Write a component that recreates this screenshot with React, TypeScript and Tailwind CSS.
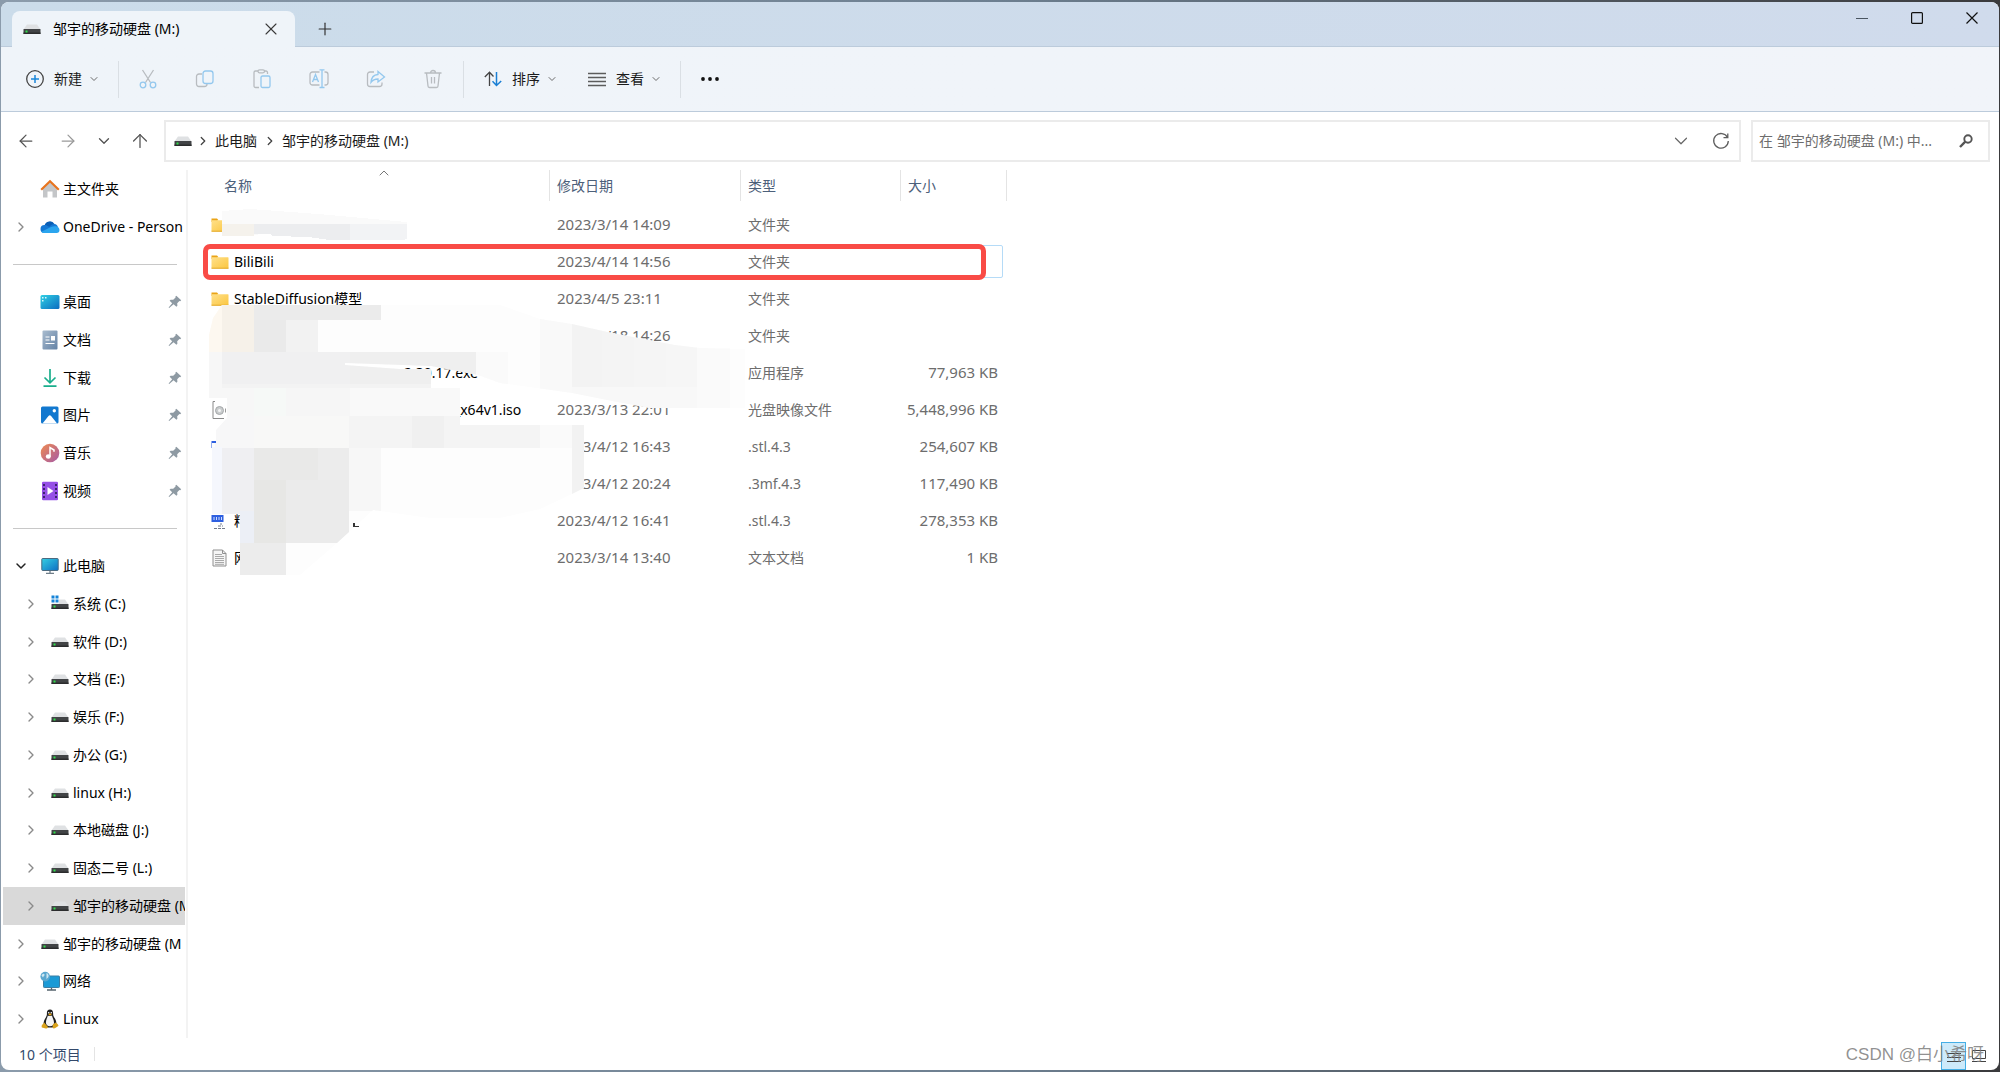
import type { ReactNode } from "react";
import { ArrowLeft, ArrowRight, ArrowUp, ChevronDown, ChevronRight, ChevronUp, Plus, X } from "lucide-react";
import clsx from "clsx";

function DriveIcon({ system = false }: { system?: boolean }) {
  return (
    <svg width="18" height="18" viewBox="0 0 18 18" className="shrink-0">
      <path d="M4 4.5h10l3.2 4.5H0.8z" fill="#dfe1e3" />
      <rect x="0.5" y="9" width="17" height="5" rx="0.5" fill="#424446" />
      <rect x="0.5" y="12.5" width="17" height="1.5" fill="#2b2c2d" />
      <rect x="2.5" y="10.5" width="2" height="2" fill="#2fe04a" />
      {system && (
        <>
          <rect x="0" y="0" width="8" height="8.6" fill="#fff" />
          <path d="M0.5 0.5h3v3h-3zM4.5 0.5h3v3h-3zM0.5 4.5h3v3h-3zM4.5 4.5h3v3h-3z" fill="#1583d8" />
        </>
      )}
    </svg>
  );
}

function HomeIcon() {
  return (
    <svg width="20" height="20" viewBox="0 0 20 20" className="-mx-px shrink-0">
      <path d="M3 9l7-6.500 7 6.500v9.500h-4.500v-6h-5v6H3z" fill="#c4c6c8" />
      <path d="M1.200 10.800L10 2.200l8.800 8.600" fill="none" stroke="#e8741e" strokeWidth="2.200" />
    </svg>
  );
}

function OneDriveIcon() {
  return (
    <svg width="20" height="20" viewBox="0 0 20 20" className="-mx-px shrink-0">
      <path d="M4.500 8.500a5.500 5.500 0 0 1 10-1.500l-6 6.500-6-2z" fill="#0a5eb5" />
      <path d="M4.500 16a4 4 0 0 1 0-8c1.500 0 2.500.5 3.500 1.200L16 13l-2 3z" fill="#1478d4" />
      <path d="M9 10.500c1-2 3-3.500 5.300-3.500 2 0 3.400 1.500 3.500 3l-4 3z" fill="#1478d4" />
      <path d="M4 16c-1 0-2-.5-2.600-1.300L11 10a8 8 0 0 1 5-.7c2 .4 3.500 1.900 3.500 3.700a3 3 0 0 1-3 3z" fill="#2ba5ee" />
    </svg>
  );
}

function DesktopIcon() {
  return (
    <svg width="20" height="20" viewBox="0 0 20 20" className="-mx-px shrink-0">
      <defs>
        <linearGradient id="desk" x1="0" y1="0" x2="1" y2="1">
          <stop offset="0" stopColor="#2fd0e4" />
          <stop offset="1" stopColor="#0c6cc0" />
        </linearGradient>
      </defs>
      <rect x="0.5" y="3" width="19" height="14" rx="1.500" fill="url(#desk)" />
      <path d="M2 5h1.500v1.500H2zM2 8h1.500v1.500H2zM5 5h1.500v1.500H5z" fill="#d4f6fb" />
    </svg>
  );
}

function DocumentIcon() {
  return (
    <svg width="20" height="20" viewBox="0 0 20 20" className="-mx-px shrink-0">
      <defs>
        <linearGradient id="doc" x1="0" y1="0" x2="1" y2="1">
          <stop offset="0" stopColor="#a9bccf" />
          <stop offset="1" stopColor="#6482a5" />
        </linearGradient>
      </defs>
      <rect x="2.500" y="0.5" width="15" height="19" rx="1" fill="url(#doc)" />
      <path d="M5.500 7h4M5.500 10h4M5.500 13.500h9" stroke="#fff" strokeWidth="1.200" />
      <rect x="11" y="6" width="4" height="4.500" fill="#fff" />
    </svg>
  );
}

function DownloadIcon() {
  return (
    <svg width="20" height="20" viewBox="0 0 20 20" fill="none" stroke="#1aae8c" strokeWidth="1.700" className="-mx-px shrink-0">
      <path d="M10 1v13.500M4.500 9.500l5.500 5.300 5.500-5.300M3.500 18.200h13" />
    </svg>
  );
}

function PictureIcon() {
  return (
    <svg width="20" height="20" viewBox="0 0 20 20" className="-mx-px shrink-0">
      <rect x="1" y="1.500" width="17.500" height="17" rx="1.500" fill="#1278cf" />
      <path d="M2.500 18.500l6-7.500q1.300-1.500 2.600 0l6 7.500z" fill="#fff" />
      <circle cx="14.300" cy="5.700" r="1.700" fill="#fff" />
    </svg>
  );
}

function MusicIcon() {
  return (
    <svg width="20" height="20" viewBox="0 0 20 20" className="-mx-px shrink-0">
      <defs>
        <linearGradient id="mus" x1="0" y1="0" x2="1" y2="1">
          <stop offset="0" stopColor="#ef8b50" />
          <stop offset="1" stopColor="#a65aa6" />
        </linearGradient>
      </defs>
      <circle cx="10" cy="10" r="9.300" fill="url(#mus)" />
      <ellipse cx="8.300" cy="13.500" rx="2.500" ry="2.200" fill="#fff" />
      <path d="M10 13.500V4.500l4 2.500v1.800" fill="none" stroke="#fff" strokeWidth="1.500" />
    </svg>
  );
}

function VideoIcon() {
  return (
    <svg width="20" height="20" viewBox="0 0 20 20" className="-mx-px shrink-0">
      <rect x="2" y="0.800" width="16" height="18.400" rx="1.200" fill="#9550e6" />
      <path d="M4 3v15M16 3v15" stroke="#3d2270" strokeWidth="2" strokeDasharray="2 2" />
      <path d="M7.500 6l6 4-6 4z" fill="#fff" />
    </svg>
  );
}

function ComputerIcon() {
  return (
    <svg width="18" height="18" viewBox="0 0 18 18" className="shrink-0">
      <defs>
        <linearGradient id="pc" x1="0" y1="0" x2="1" y2="1">
          <stop offset="0" stopColor="#35cfe2" />
          <stop offset="1" stopColor="#0f6fc4" />
        </linearGradient>
      </defs>
      <rect x="0.8" y="1.500" width="16.400" height="12" rx="0.800" fill="url(#pc)" stroke="#4b6a80" />
      <path d="M9 14v2M5 16.300h8" stroke="#6f7e89" strokeWidth="1.300" />
    </svg>
  );
}

function NetworkIcon() {
  return (
    <svg width="20" height="20" viewBox="0 0 20 20" className="-mx-px shrink-0">
      <rect x="3.500" y="5" width="16" height="11.500" rx="0.800" fill="#1b9ad6" stroke="#3c7ea3" />
      <path d="M11.500 17v1.500M7 19h9" stroke="#56646e" strokeWidth="1.300" />
      <circle cx="5.200" cy="5.600" r="4.800" fill="#5aa7cf" />
      <path d="M1.500 4.500c1-2 2.500-2 3-1s-1 1.500-1.500 3zM6.500 2c1.500.6 2.500 2 2 3.500s-1.500 1.500-2 3z" fill="#cfe7f2" />
    </svg>
  );
}

function TuxIcon() {
  return (
    <svg width="18" height="20" viewBox="0 0 18 20" className="shrink-0">
      <path d="M9 0.500c-2.300 0-3.200 1.600-3.100 3.600.1 2.400-.2 3-1.400 4.900C3.200 11 2.500 13 2.600 15l4 3.500h5l3.800-3.500c.1-2.500-.7-4.500-2-6.300-1.100-1.600-1.300-2.300-1.300-4.400C12.100 2 11.200.5 9 .5z" fill="#1d1d1d" />
      <path d="M9 6.800c-1 .4-1.800.2-2.200-.2C6.500 8.500 5 10.500 4.900 13.500c0 2 1.600 3.800 4.100 3.800s4.100-1.800 4-3.800c-.1-3-1.700-5-2-7-.5.500-1.200.7-2 .3z" fill="#f4f4f4" />
      <circle cx="7.700" cy="3.700" r="0.800" fill="#fff" />
      <circle cx="10.300" cy="3.700" r="0.800" fill="#fff" />
      <path d="M7.200 5.200L9 4.300l1.900.9L9 6.700z" fill="#e9a91b" />
      <path d="M3.200 13.500l3.600 4.300c.4 1.100-.6 1.900-2 1.600l-3.900-1c-.6-.3 0-1.500 0-2.600 1-.1 1.400-1.200 2.300-2.300zM14.700 13.500l-2.700 1.700c-.4 1.500-.5 2.600-.3 3.500.5 1 1.700.9 2.600.3l3-2c.5-.5-.4-1-.7-1.900z" fill="#d9a21c" />
    </svg>
  );
}

function FolderIcon() {
  return (
    <svg width="18" height="18" viewBox="0 0 18 18" className="shrink-0">
      <defs>
        <linearGradient id="fold" x1="0" y1="0" x2="1" y2="1">
          <stop offset="0" stopColor="#ffe08a" />
          <stop offset="1" stopColor="#fbc63f" />
        </linearGradient>
      </defs>
      <path d="M0.500 2.500h5.500l1.500 1.800h-1V6h-6z" fill="#eaa417" />
      <rect x="0.500" y="4.200" width="17" height="11.500" rx="0.600" fill="url(#fold)" />
      <path d="M0.500 15.200h17" stroke="#e2ac33" />
    </svg>
  );
}

function DiscIcon() {
  return (
    <svg width="18" height="18" viewBox="0 0 18 18" className="shrink-0">
      <path d="M4 0.500H2v17h11" fill="none" stroke="#8a8a8a" />
      <circle cx="8.500" cy="9.500" r="4" fill="#c9cccd" stroke="#a5a8aa" />
      <circle cx="8.500" cy="9.500" r="1.500" fill="#f4f4f4" />
      <path d="M14.500 7.500v4" stroke="#9b9b9b" />
    </svg>
  );
}

function ModelIcon() {
  return (
    <svg width="18" height="18" viewBox="0 0 18 18" className="shrink-0">
      <rect x="0.500" y="3" width="12" height="7" fill="#2d5fe0" />
      <path d="M3 5v3M5.500 5v3M8 5v3M10.500 5v3" stroke="#cfdcff" />
      <path d="M3 16.500h11M10 13v-2M7 14h5" stroke="#737b8a" strokeDasharray="3 1" />
    </svg>
  );
}

function TextIcon() {
  return (
    <svg width="18" height="18" viewBox="0 0 18 18" className="shrink-0">
      <path d="M2 1h9.500L15 4.500V17H2z" fill="#f5f5f5" stroke="#909090" />
      <path d="M11.500 1v3.500H15" fill="none" stroke="#909090" />
      <path d="M4 5.500h7M4 7.500h9M4 9.500h9M4 11.500h9M4 13.500h9M4 15.300h9" stroke="#a9a9a9" />
    </svg>
  );
}

function PinIcon() {
  return (
    <svg width="14" height="14" viewBox="0 0 14 14" className="shrink-0">
      <path d="M8.300 0.800l4.900 4.500-1 .9-.8-.2-2.200 2.300.2 2.500-1 1-2.800-2.600L1.200 13l-.6-.5L4.200 8.200 1.600 5.700l1-1 2.600.1 2.400-2.200-.3-.9z" fill="#8e9aa3" />
    </svg>
  );
}

const gray = "#b8bcc0";
const blue = "#94c8ee";

const editTools: { label: string; icon: ReactNode }[] = [
  {
    label: "剪切",
    icon: (
      <>
        <path d="M4.500 1l8 12.500M15.500 1l-8 12.500" stroke={gray} />
        <circle cx="5" cy="16" r="2.800" stroke={blue} />
        <circle cx="15" cy="16" r="2.800" stroke={blue} />
      </>
    ),
  },
  {
    label: "复制",
    icon: (
      <>
        <path d="M7 5H4a2.500 2.500 0 0 0-2.500 2.500v7.300A2.500 2.500 0 0 0 4 17.500h5.500A2.500 2.500 0 0 0 12 15" stroke={gray} />
        <rect x="8" y="2" width="10" height="12.500" rx="2.500" stroke={blue} />
      </>
    ),
  },
  {
    label: "粘贴",
    icon: (
      <>
        <path d="M7 18.500H3.500a1.500 1.500 0 0 1-1.500-1.500V3.500A1.500 1.500 0 0 1 3.500 2H6M12 2h2a1.500 1.500 0 0 1 1.500 1.500V5" stroke={gray} />
        <rect x="6" y="0.800" width="6.500" height="3" rx="1.500" stroke={gray} />
        <rect x="9" y="7" width="9" height="11.500" rx="1.500" stroke={blue} />
      </>
    ),
  },
  {
    label: "重命名",
    icon: (
      <>
        <path d="M10.500 3H3.500A2.500 2.500 0 0 0 1 5.500v8A2.500 2.500 0 0 0 3.500 16h7M15.500 3h1A2.500 2.500 0 0 1 19 5.500v8a2.500 2.500 0 0 1-2.500 2.500h-1" stroke={gray} />
        <path d="M3.500 13l3-7.500 3 7.500M4.500 10.500h4M13 1v17.500M10.500 0.800h5M10.500 18.500h5" stroke={blue} />
      </>
    ),
  },
  {
    label: "共享",
    icon: (
      <>
        <path d="M8 3H4a2.500 2.500 0 0 0-2.500 2.500V15A2.500 2.500 0 0 0 4 17.500h9.500A2.500 2.500 0 0 0 16 15v-1.500" stroke={gray} />
        <path d="M12 2.500l6.500 5.500-6.500 5v-3c-3.500 0-5 .5-7 3.300C5.300 8.500 8 5.800 12 5.500z" stroke={blue} />
      </>
    ),
  },
  {
    label: "删除",
    icon: (
      <path d="M1.500 4h17M3.500 4l1.500 13a1.500 1.500 0 0 0 1.500 1.500h7A1.500 1.500 0 0 0 15 17l1.500-13M7.500 4a2.500 2.500 0 0 1 5 0M8.500 8v6.500M11.500 8v6.500" stroke={gray} />
    ),
  },
];

type NavItem = {
  label: string;
  icon: ReactNode;
  arrow?: "right" | "down";
  nested?: boolean;
  pinned?: boolean;
  selected?: boolean;
};

const navItems: (NavItem | null)[] = [
  { label: "主文件夹", icon: <HomeIcon /> },
  { label: "OneDrive - Person", icon: <OneDriveIcon />, arrow: "right" },
  null,
  { label: "桌面", icon: <DesktopIcon />, pinned: true },
  { label: "文档", icon: <DocumentIcon />, pinned: true },
  { label: "下载", icon: <DownloadIcon />, pinned: true },
  { label: "图片", icon: <PictureIcon />, pinned: true },
  { label: "音乐", icon: <MusicIcon />, pinned: true },
  { label: "视频", icon: <VideoIcon />, pinned: true },
  null,
  { label: "此电脑", icon: <ComputerIcon />, arrow: "down" },
  { label: "系统 (C:)", icon: <DriveIcon system />, arrow: "right", nested: true },
  { label: "软件 (D:)", icon: <DriveIcon />, arrow: "right", nested: true },
  { label: "文档 (E:)", icon: <DriveIcon />, arrow: "right", nested: true },
  { label: "娱乐 (F:)", icon: <DriveIcon />, arrow: "right", nested: true },
  { label: "办公 (G:)", icon: <DriveIcon />, arrow: "right", nested: true },
  { label: "linux (H:)", icon: <DriveIcon />, arrow: "right", nested: true },
  { label: "本地磁盘 (J:)", icon: <DriveIcon />, arrow: "right", nested: true },
  { label: "固态二号 (L:)", icon: <DriveIcon />, arrow: "right", nested: true },
  { label: "邹宇的移动硬盘 (M:)", icon: <DriveIcon />, arrow: "right", nested: true, selected: true },
  { label: "邹宇的移动硬盘 (M", icon: <DriveIcon />, arrow: "right" },
  { label: "网络", icon: <NetworkIcon />, arrow: "right" },
  { label: "Linux", icon: <TuxIcon />, arrow: "right" },
];

const files: { name: string; icon: ReactNode; date: string; type: string; size: string; indent?: string }[] = [
  { name: "", icon: <FolderIcon />, date: "2023/3/14 14:09", type: "文件夹", size: "" },
  { name: "BiliBili", icon: <FolderIcon />, date: "2023/4/14 14:56", type: "文件夹", size: "" },
  { name: "StableDiffusion模型", icon: <FolderIcon />, date: "2023/4/5 23:11", type: "文件夹", size: "" },
  { name: "", icon: null, date: "2023/3/18 14:26", type: "文件夹", size: "" },
  { name: "2.30.17.exe", icon: null, date: "", type: "应用程序", size: "77,963 KB", indent: "pl-[170px]" },
  { name: "_x64v1.iso", icon: <DiscIcon />, date: "2023/3/13 22:01", type: "光盘映像文件", size: "5,448,996 KB", indent: "pl-[220px]" },
  { name: "", icon: <ModelIcon />, date: "2023/4/12 16:43", type: ".stl.4.3", size: "254,607 KB" },
  { name: "", icon: null, date: "2023/4/12 20:24", type: ".3mf.4.3", size: "117,490 KB" },
  { name: "精", icon: <ModelIcon />, date: "2023/4/12 16:41", type: ".stl.4.3", size: "278,353 KB" },
  { name: "网", icon: <TextIcon />, date: "2023/3/14 13:40", type: "文本文档", size: "1 KB" },
];

// x, y, width, height, fill
const mosaic: [number, number, number, number, string][] = [
  [209, 305, 13, 47, "#fdf8f0"],
  [222, 305, 32, 47, "#f6f1e9"],
  [254, 305, 127, 15, "#ebebeb"],
  [254, 320, 32, 32, "#eaeaea"],
  [286, 320, 32, 32, "#f2f2f2"],
  [209, 352, 13, 48, "#f7f7f7"],
  [222, 352, 128, 32, "#f0f0f1"],
  [350, 352, 126, 32, "#efefef"],
  [476, 352, 32, 32, "#fafafa"],
  [222, 384, 238, 4, "#f3f3f3"],
  [222, 388, 32, 28, "#f7f7f7"],
  [254, 388, 32, 28, "#f6f9f7"],
  [286, 388, 64, 28, "#f6f6f6"],
  [350, 388, 110, 28, "#f9f9f9"],
  [215, 416, 39, 32, "#f7f7f8"],
  [254, 416, 95, 32, "#f8f8f7"],
  [349, 416, 63, 32, "#f4f4f4"],
  [412, 416, 32, 32, "#f0f0f0"],
  [444, 416, 96, 32, "#f4f4f4"],
  [540, 416, 32, 32, "#fafafa"],
  [572, 420, 12, 75, "#f2f2f2"],
  [212, 447, 10, 67, "#f5f7fd"],
  [222, 448, 32, 66, "#efeff2"],
  [240, 511, 14, 32, "#eceff6"],
  [254, 448, 64, 32, "#e9e9e8"],
  [318, 448, 31, 32, "#ececec"],
  [254, 480, 32, 63, "#e7e7e5"],
  [286, 480, 63, 63, "#ebebeb"],
  [349, 448, 32, 63, "#f7f7f7"],
  [240, 543, 46, 32, "#ececec"],
  [540, 310, 32, 90, "#f9f9f9"],
  [572, 315, 30, 72, "#f3f3f3"],
  [602, 315, 32, 72, "#f4f4f4"],
  [634, 315, 32, 72, "#f5f5f5"],
  [666, 315, 31, 72, "#f6f6f6"],
  [572, 387, 125, 22, "#f8f8f8"],
  [697, 340, 33, 69, "#fafafa"],
];

// Scribbled-out area covering private file names
function Redaction() {
  return (
    <svg
      width="560"
      height="400"
      viewBox="200 200 560 400"
      shapeRendering="crispEdges"
      className="pointer-events-none absolute top-[30px] -left-[5px]"
      aria-hidden="true"
    >
      <defs>
        <clipPath id="smear">
          <path d="M222 305H500L540 319L572 324L612 333L675 345L700 348L745 349V408H650L612 401L572 393L500 383L478 375L431 366L345 363V365L400 369H431V388H460V425H584V488L572 494L540 509L500 518H430L373 510L337 543L300 575H240V514H212V443H216V430L227 418V398H209V335L213 318Z" />
        </clipPath>
      </defs>
      <path d="M222 211L250 209L318 214L407 222V237Q407 240 402 240H330L308 237L273 236L270 234L222 236Z" fill="#fafafa" />
      <rect x="222" y="224" width="32" height="12" fill="#f5f2ec" />
      <path d="M254 224H350V240H330L308 237L273 236L270 234H254Z" fill="#ecedef" />
      <path d="M350 224H407V237Q407 240 402 240H350Z" fill="#f2f3f5" />
      <g clipPath="url(#smear)">
        <rect x="205" y="300" width="545" height="280" fill="#fdfdfd" />
        {mosaic.map(([x, y, w, h, fill]) => (
          <rect key={`${x}-${y}`} x={x} y={y} width={w} height={h} fill={fill} />
        ))}
      </g>
      <path d="M353 523h2v3h4v1h-6z" fill="#333" />
    </svg>
  );
}

function ToolDivider({ className }: { className?: string }) {
  return <span className={clsx("h-[37px] w-px shrink-0 bg-[#dadfe4]", className)} />;
}

function MenuButton({ label, icon }: { label: string; icon: ReactNode }) {
  return (
    <button className="flex h-10 items-center px-4 text-[#1b1b1b]">
      <svg width="18" height="18" viewBox="0 0 18 18" fill="none" strokeWidth="1.300">
        {icon}
      </svg>
      <span className="mr-2 ml-2.5">{label}</span>
      <ChevronDown className="-mx-0.5 h-3 w-3 text-[#6b6b6b]" strokeWidth={2} />
    </button>
  );
}

function TitleBar() {
  return (
    <header className="flex h-[45px] shrink-0 border-b border-[#bccbdb] bg-linear-to-r from-[#cbdcea] to-[#d0dbec]">
      <div className="relative mt-[9px] -mb-px ml-[11px] flex w-[283px] items-center rounded-t-lg bg-[#eff4f9] pr-3.5 pl-[11px]">
        <DriveIcon />
        <span className="ml-3 flex-1 text-black">邹宇的移动硬盘 (M:)</span>
        <button aria-label="关闭标签页">
          <X className="h-5 w-5 text-[#3a3a3a]" strokeWidth={1.3} />
        </button>
      </div>
      <button aria-label="新建标签页" className="mt-[9px] ml-5 self-center">
        <Plus className="h-5 w-5 text-[#2f2f2f]" strokeWidth={1.4} />
      </button>
      <div className="ml-auto flex h-8 text-black">
        <button aria-label="最小化" className="flex w-[55px] items-center justify-center">
          <svg width="12" height="12" viewBox="0 0 12 12">
            <path d="M0 6.500h12" stroke="#4a5560" />
          </svg>
        </button>
        <button aria-label="最大化" className="flex w-[55px] items-center justify-center">
          <svg width="12" height="12" viewBox="0 0 12 12">
            <rect x="0.600" y="0.600" width="10.800" height="10.800" rx="1" fill="none" stroke="#111" strokeWidth="1.200" />
          </svg>
        </button>
        <button aria-label="关闭" className="flex w-[55px] items-center justify-center">
          <svg width="12" height="12" viewBox="0 0 12 12">
            <path d="M0.500 0.500l11 11M11.500 0.500l-11 11" stroke="#111" strokeWidth="1.200" />
          </svg>
        </button>
      </div>
    </header>
  );
}

function Toolbar() {
  return (
    <div className="flex h-[65px] shrink-0 items-center border-b border-[#bccbdb] bg-linear-to-r from-[#eff4f9] to-[#f1f4f9] pl-[9px]">
      <MenuButton
        label="新建"
        icon={
          <>
            <circle cx="9" cy="9" r="8.300" stroke="#444" />
            <path d="M9 5v8M5 9h8" stroke="#1a86d9" strokeWidth="1.500" />
          </>
        }
      />
      <ToolDivider className="ml-1" />
      {editTools.map((tool) => (
        <button key={tool.label} aria-label={tool.label} className="flex h-10 w-[57px] items-center justify-center">
          <svg width="20" height="20" viewBox="0 0 20 20" fill="none" strokeWidth="1.300">
            {tool.icon}
          </svg>
        </button>
      ))}
      <ToolDivider className="mr-1 ml-0.5" />
      <MenuButton
        label="排序"
        icon={
          <>
            <path d="M5.500 16V2.500M0.800 7l4.700-4.700L9.500 6.500" stroke="#444" />
            <path d="M12.500 2v13.500M8.500 11.300l4 4.200 4.700-4.500" stroke="#1a7fd4" strokeWidth="1.500" />
          </>
        }
      />
      <MenuButton label="查看" icon={<path d="M0 3.500h18M0 7.500h18M0 11.500h18M0 15.500h18" stroke="#5c5c5c" />} />
      <ToolDivider className="ml-1" />
      <button aria-label="更多" className="ml-[19px]">
        <svg width="20" height="6" viewBox="0 0 20 6" fill="#111">
          <circle cx="3" cy="3" r="1.900" />
          <circle cx="10" cy="3" r="1.900" />
          <circle cx="17" cy="3" r="1.900" />
        </svg>
      </button>
    </div>
  );
}

function AddressRow() {
  return (
    <div className="flex h-[58px] shrink-0 items-center pr-[9px] pl-[15px] text-[#555]">
      <button aria-label="后退" className="w-[42px]">
        <ArrowLeft className="h-5 w-5" strokeWidth={1.5} />
      </button>
      <button aria-label="前进" className="w-[37px]">
        <ArrowRight className="h-5 w-5 text-[#9a9a9a]" strokeWidth={1.5} />
      </button>
      <button aria-label="最近浏览的位置" className="w-[34px]">
        <ChevronDown className="h-[18px] w-[18px]" strokeWidth={1.8} />
      </button>
      <button aria-label="上移" className="w-[35px]">
        <ArrowUp className="h-[22px] w-[22px]" strokeWidth={1.4} />
      </button>
      <div className="flex h-[42px] flex-1 items-center border-2 border-[#ebebeb] pr-[9px] pl-2 text-[#1b1b1b]">
        <DriveIcon />
        <ChevronRight className="mx-1 h-3.5 w-3.5 text-[#444]" strokeWidth={2.2} />
        <button className="mr-0.5 ml-px">此电脑</button>
        <ChevronRight className="mx-1 h-3.5 w-3.5 text-[#444]" strokeWidth={2.2} />
        <button className="mx-px">邹宇的移动硬盘 (M:)</button>
        <button aria-label="历史记录" className="mr-5 ml-auto">
          <ChevronDown className="h-[22px] w-[22px] text-[#666]" strokeWidth={1.3} />
        </button>
        <button aria-label="刷新">
          <svg width="18" height="18" viewBox="0 0 18 18" fill="none" stroke="#5f5f5f" strokeWidth="1.300">
            <path d="M15.500 5.500A7.300 7.300 0 1 0 16.300 9M15.800 1.500v4.200h-4.300" />
          </svg>
        </button>
      </div>
      <div className="ml-2.5 flex h-[42px] w-[239px] items-center border-2 border-[#ebebeb] pr-[15px] pl-1.5">
        <input
          aria-label="搜索"
          placeholder="在 邹宇的移动硬盘 (M:) 中..."
          className="min-w-0 flex-1 outline-none placeholder:text-[#6d6d6d]"
        />
        <svg width="14" height="14" viewBox="0 0 14 14" fill="none" stroke="#555">
          <circle cx="9" cy="5" r="3.700" strokeWidth="1.900" />
          <path d="M6.300 7.700L1 13" strokeWidth="2.400" />
        </svg>
      </div>
    </div>
  );
}

function Sidebar() {
  return (
    <nav className="flex w-[187px] shrink-0 flex-col border-r-2 border-[#f3f3f3] pr-px text-black">
      {navItems.map((item, i) =>
        item === null ? (
          <div key={i} className="flex flex-1 items-center pr-2 pl-3">
            <hr className="w-full border-[#c8c8c8]" />
          </div>
        ) : (
          <a
            key={i}
            href="#"
            className={clsx(
              "ml-0.5 flex flex-1 items-center overflow-hidden whitespace-nowrap",
              item.nested ? "pl-5" : "pl-2.5",
              item.selected && "bg-[#d9d9d9]"
            )}
          >
            <span className="flex w-7 shrink-0">
              {item.arrow === "right" && <ChevronRight className="h-4 w-4 text-[#8a8a8a]" strokeWidth={2} />}
              {item.arrow === "down" && <ChevronDown className="h-4 w-4 text-[#222]" strokeWidth={2.2} />}
            </span>
            {item.icon}
            <span className="ml-1">{item.label}</span>
            {item.pinned && (
              <span className="mr-[3px] ml-auto">
                <PinIcon />
              </span>
            )}
          </a>
        )
      )}
    </nav>
  );
}

function FileTable() {
  const th = "flex h-[31px] items-center border-r border-[#e4e4e4] pl-[7px]";
  return (
    <div className="relative ml-[17px] w-[802px]">
      <ChevronUp className="absolute -top-[5px] left-[171px] h-4 w-4 text-[#777]" strokeWidth={1.5} />
      <table className="w-full table-fixed border-collapse">
        <colgroup>
          <col className="w-[345px]" />
          <col className="w-[191px]" />
          <col className="w-[160px]" />
          <col className="w-[106px]" />
        </colgroup>
        <thead>
          <tr className="h-[36px] text-left align-top text-[#4c607a]">
            <th className="p-0 font-normal">
              <div className="flex h-[31px] items-center border-r border-[#e4e4e4] pl-[19px]">名称</div>
            </th>
            <th className="p-0 font-normal">
              <div className={th}>修改日期</div>
            </th>
            <th className="p-0 font-normal">
              <div className={th}>类型</div>
            </th>
            <th className="p-0 font-normal">
              <div className={th}>大小</div>
            </th>
          </tr>
        </thead>
        <tbody>
          {files.map((file) => (
            <tr key={file.type + file.date} className="h-[37px] whitespace-nowrap text-[#6d6d6d]">
              <td className="p-0">
                <div className="flex items-center pl-1.5 text-black">
                  {file.icon ?? <span className="w-[18px]" />}
                  <span className={clsx("ml-[5px]", file.indent)}>{file.name}</span>
                </div>
              </td>
              <td className="p-0 pl-[7px] text-[15px]">{file.date}</td>
              <td className="p-0 pl-[7px]">{file.type}</td>
              <td className="p-0 pr-[9px] text-right text-[15px]">{file.size}</td>
            </tr>
          ))}
        </tbody>
      </table>
      <div className="absolute top-[75px] left-0 h-[33px] w-[798px] rounded-xs border border-[#b5dbf7]" />
      <Redaction />
      <div className="absolute top-[74px] -left-[2px] h-[36px] w-[783px] rounded-[7px] border-[5px] border-[#f94b46]" />
    </div>
  );
}

function StatusBar() {
  return (
    <footer className="relative flex h-8 shrink-0 items-center pr-[11px] pl-[18px] text-[#33496b]">
      <span className="pt-0.5">10 个项目</span>
      <span className="ml-[13px] h-3.5 w-px bg-[#e4e4e4]" />
      <button
        aria-label="详细信息"
        className="mt-1 ml-auto flex h-7 w-[25px] items-center justify-center border border-[#45aee5] bg-[#cdeafa]"
      >
        <svg width="16" height="16" viewBox="0 0 16 16" stroke="#444">
          <path d="M1 5.500h14M1 9.500h14M1 13.500h14" />
        </svg>
      </button>
      <button aria-label="大图标" className="mt-1 ml-1 flex h-7 w-[18px] items-center justify-center">
        <svg width="16" height="16" viewBox="0 0 16 16" fill="none" stroke="#444">
          <path d="M1.500 2.500h13v8h-13zM1 13.500h14" />
        </svg>
      </button>
      <span className="absolute right-[15px] bottom-[3px] font-['Liberation_Sans','Noto_Sans_CJK_SC',sans-serif] text-[17px] text-[#7d7d7d]/85">
        CSDN @白小希呀
      </span>
    </footer>
  );
}

export default function App() {
  return (
    <div className="h-screen bg-linear-to-r from-[#8b9bab] via-[#6d7f90] to-[#3a3a3c] px-px py-0.5 font-['Noto_Sans','Noto_Sans_CJK_SC',sans-serif] text-sm">
      <div className="flex h-full flex-col overflow-hidden rounded-lg bg-white">
        <TitleBar />
        <Toolbar />
        <AddressRow />
        <div className="flex min-h-0 flex-1">
          <Sidebar />
          <main className="min-w-0 flex-1">
            <FileTable />
          </main>
        </div>
        <StatusBar />
      </div>
    </div>
  );
}
